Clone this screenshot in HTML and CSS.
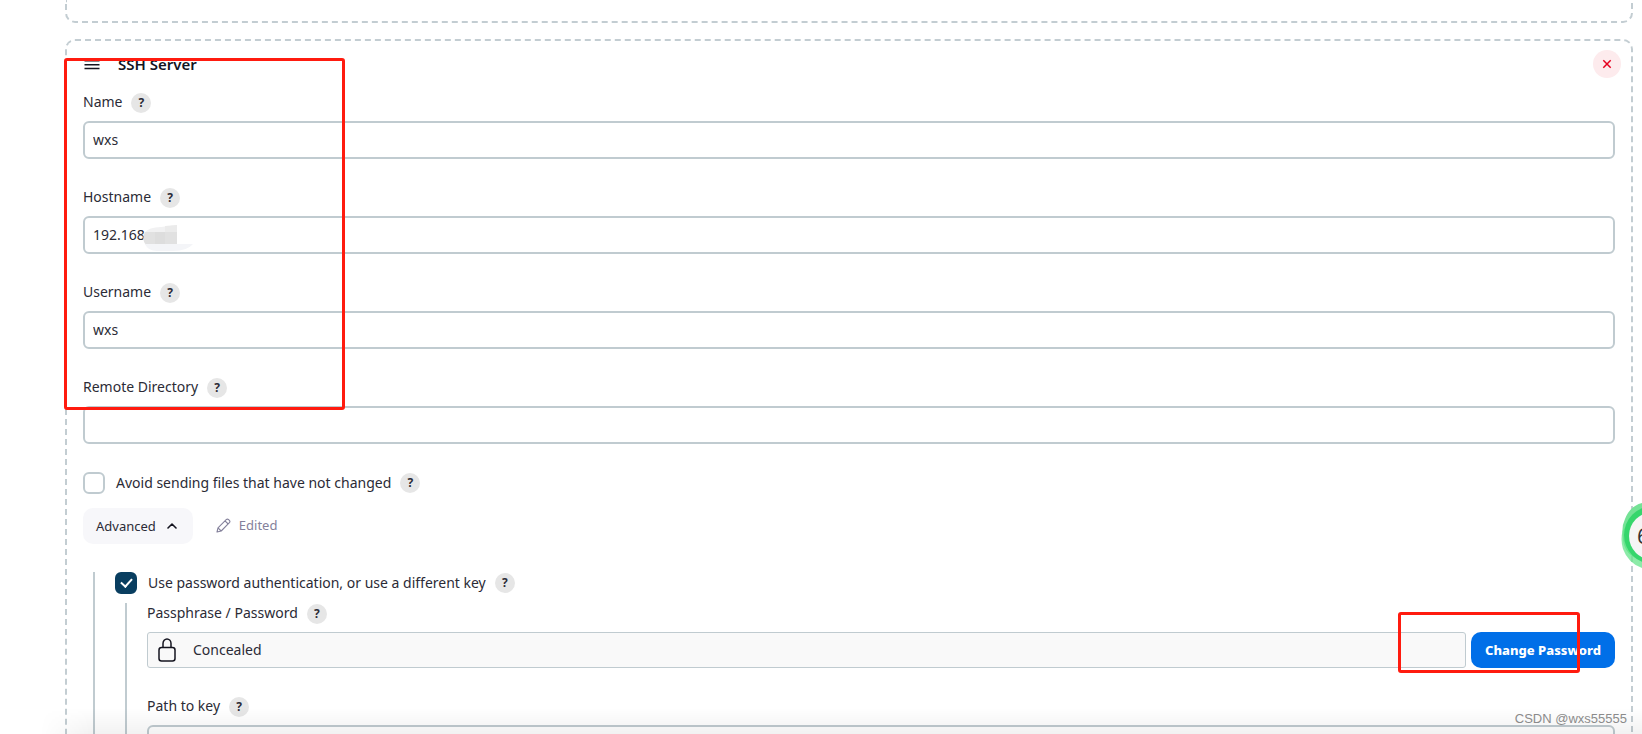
FILE: index.html
```html
<!DOCTYPE html>
<html lang="en">
<head>
<meta charset="utf-8">
<title>SSH Server configuration</title>
<link rel="stylesheet" href="styles.css">
</head>
<body>
<main class="page">
  <section class="card card-previous" aria-hidden="true"></section>
  <section class="card">
    <header class="card-header">
      <svg class="drag-handle" width="16" height="16" viewBox="0 0 16 16" aria-hidden="true"><path d="M.5 4.700h15M.5 8.700h15M.5 12.500h15" stroke="#14141f" stroke-width="1.5"/></svg>
      <h2 class="card-title">SSH Server</h2>
      <button class="delete" type="button" aria-label="Delete"><svg width="10" height="10" viewBox="0 0 10 10"><path d="M1.300 1.300l7.400 7.400M8.700 1.300L1.300 8.700" stroke="#e6001f" stroke-width="1.5"/></svg></button>
    </header>

    <div class="field">
      <div class="label-row"><label for="name">Name</label><button class="help" type="button">?</button></div>
      <input class="text-input" id="name" type="text" value="wxs">
    </div>
    <div class="field">
      <div class="label-row"><label for="host">Hostname</label><button class="help" type="button">?</button></div>
      <div class="masked">
        <input class="text-input" id="host" type="text" value="192.168">
        <svg class="smudge" width="54" height="28" viewBox="0 0 54 28" aria-hidden="true">
          <path d="M3 8Q8 2 20 2L36 0V8H3z" fill="#f1f1f2"/><path d="M24 1L36 0V8H24z" fill="#ebebeb"/>
          <path d="M4 7H36V20H5Q0 14 4 7z" fill="#e1e1e1"/><path d="M14 7h10v13H14z" fill="#dddddd"/>
          <path d="M4 19H52Q46 26 32 26H16Q7 26 4 19z" fill="#f4f5f8"/>
        </svg>
      </div>
    </div>
    <div class="field">
      <div class="label-row"><label for="user">Username</label><button class="help" type="button">?</button></div>
      <input class="text-input" id="user" type="text" value="wxs">
    </div>
    <div class="field">
      <div class="label-row"><label for="dir">Remote Directory</label><button class="help" type="button">?</button></div>
      <input class="text-input" id="dir" type="text" value="">
    </div>

    <div class="check-row">
      <input class="check" id="avoid" type="checkbox"><label for="avoid">Avoid sending files that have not changed</label><button class="help" type="button">?</button>
    </div>
    <div class="advanced-row">
      <button class="advanced" type="button">Advanced <svg width="10" height="8" viewBox="0 0 10 8" aria-hidden="true"><path d="M1 6l4-4 4 4" fill="none" stroke="#14141f" stroke-width="1.6" stroke-linecap="round" stroke-linejoin="round"/></svg></button>
      <span class="edited"><svg width="15" height="15" viewBox="0 0 15 15" aria-hidden="true"><path d="M1 14l1-4.200 8.200-8.200q1.200-1.100 2.500.1l.6.6q1.200 1.200.1 2.400L5.200 13zM9 2.900L12.200 6M2 9.800L5.200 13" fill="none" stroke="#84819b" stroke-width="1.1" stroke-linejoin="round"/></svg>Edited</span>
    </div>

    <div class="nested nested-outer">
      <div class="check-row">
        <input class="check" id="pwauth" type="checkbox" checked><label for="pwauth">Use password authentication, or use a different key</label><button class="help" type="button">?</button>
      </div>
      <div class="nested">
        <div class="field">
          <div class="label-row"><span>Passphrase / Password</span><button class="help" type="button">?</button></div>
          <div class="password-row">
            <div class="concealed">
              <svg width="18" height="24" viewBox="0 0 18 24" aria-hidden="true"><rect x="1" y="9.500" width="16" height="13.500" rx="2.500" fill="none" stroke="#14141f" stroke-width="1.5"/><path d="M5 9.500V5.500a4 4.500 0 0 1 8 0v4" fill="none" stroke="#14141f" stroke-width="1.5"/></svg>
              <span>Concealed</span>
            </div>
            <button class="primary" type="button">Change Password</button>
          </div>
        </div>
        <div class="field">
          <div class="label-row"><label for="key">Path to key</label><button class="help" type="button">?</button></div>
          <input class="text-input" id="key" type="text" value="">
        </div>
      </div>
    </div>
  </section>
</main>
<div class="bottom-shade"></div>
<div class="mark mark-fields"></div>
<div class="mark mark-password"></div>
<svg class="gauge" width="24" height="72" viewBox="0 0 24 72" aria-hidden="true">
  <path d="M24 4Q12 7 7 20Q3 28 5 40Q6 56 24 62z" fill="#75e296"/>
  <path d="M5 31Q2 40 5 50Q10 64 24 69V14z" fill="#65e48b" fill-opacity=".75"/>
  <circle cx="35" cy="36" r="29" fill="#36d66c"/>
  <circle cx="35" cy="37" r="24" fill="#f5f5f5"/>
  <text class="gauge-text" x="19" y="45">6</text>
</svg>
<div class="watermark">CSDN @wxs55555</div>
</body>
</html>
```
FILE: styles.css
```css
* { box-sizing: border-box; }
body {
  position: relative;
  height: 100vh;
  margin: 0;
  overflow: hidden;
  background: #fff;
  color: #2b2b36;
  font: 14px/20px "Noto Sans", "Open Sans", sans-serif;
}
button, input { margin: 0; color: inherit; font: inherit; }
.page { padding: 0 9px 0 65px; }
.card {
  padding: 9px 16px;
  border: 2px dashed #c3cdd2;
  border-radius: 10px;
}
.card-previous {
  height: 23px;
  margin-bottom: 16px;
  padding: 0;
  border-top: 0;
  border-radius: 0 0 10px 10px;
}
.card-header {
  display: flex;
  align-items: center;
  height: 28px;
  margin: 0 -6px 14px 0;
}
.drag-handle { margin: 0 18px 0 1px; }
.card-title {
  flex: 1;
  margin: 0;
  color: #14141f;
  font-size: 15px;
  font-weight: 600;
  line-height: 28px;
}
.delete {
  display: grid;
  place-items: center;
  width: 28px;
  height: 28px;
  padding: 0;
  border: 0;
  border-radius: 50%;
  background: #fdebed;
}
.field { margin-bottom: 28px; }
.label-row {
  display: flex;
  align-items: flex-end;
  gap: 9px;
  height: 21px;
  margin-bottom: 8px;
}
.label-row > :first-child { align-self: flex-start; line-height: 19px; }
.help {
  width: 20px;
  height: 20px;
  padding: 0;
  border: 0;
  border-radius: 50%;
  background: #e6e6e6;
  font-size: 12px;
  font-weight: 700;
  line-height: 20px;
  text-align: center;
}
.text-input {
  display: block;
  width: 100%;
  height: 38px;
  padding: 0 8px 2px;
  border: 2px solid #c0cbd0;
  border-radius: 6px;
  background: #fff;
}
.masked { position: relative; }
.smudge { position: absolute; top: 9px; left: 58px; }
.check-row { display: flex; align-items: center; height: 22px; }
.check {
  display: grid;
  place-items: center;
  width: 22px;
  height: 22px;
  margin-right: 11px;
  border: 2px solid #c0cbd0;
  border-radius: 6px;
  background: #fff;
  appearance: none;
}
.check:checked { border-color: #093e60; background: #093e60; }
.check:checked::after {
  width: 5px;
  height: 9px;
  margin-bottom: 3px;
  border: solid #fff;
  border-width: 0 2px 2px 0;
  content: "";
  transform: rotate(42deg);
}
.check-row .help { margin-left: 9px; }
.advanced-row {
  display: flex;
  align-items: center;
  gap: 23px;
  margin: 14px 0 28px;
}
.advanced {
  display: flex;
  align-items: center;
  gap: 11px;
  height: 36px;
  padding: 0 16px 0 13px;
  border: 0;
  border-radius: 10px;
  background: #f7f7fa;
  font-size: 13px;
}
.edited {
  display: flex;
  align-items: center;
  gap: 8px;
  padding-bottom: 2px;
  color: #84819b;
  font-size: 13px;
}
.nested {
  margin: 9px 0 0 10px;
  padding-left: 20px;
  border-left: 2px solid #c0cbd0;
}
.nested-outer { margin-top: 0; }
.password-row { display: flex; gap: 5px; }
.concealed {
  display: flex;
  flex: 1;
  align-items: center;
  gap: 17px;
  height: 36px;
  padding: 0 10px;
  border: 1px solid #c0cbd0;
  border-radius: 3px;
  background: #f9f9f9;
}
.primary {
  height: 36px;
  padding: 0 14px;
  border: 0;
  border-radius: 10px;
  background: #006fe8;
  color: #fff;
  font-size: 13px;
  font-weight: 800;
}
.bottom-shade {
  position: absolute;
  right: 0;
  bottom: 0;
  left: 40px;
  height: 26px;
  background: linear-gradient(transparent, rgba(0, 0, 0, .05));
  mask-image: linear-gradient(90deg, transparent, #000 50px);
}
.mark { position: absolute; border: 3px solid #ff1b0f; border-radius: 3px; }
.mark-fields { top: 58px; left: 64px; width: 281px; height: 352px; }
.mark-password { top: 612px; left: 1398px; width: 182px; height: 61px; }
.gauge { position: absolute; top: 499px; right: 0; }
.gauge-text { fill: #333; font: 22px "Open Sans", sans-serif; }
.watermark {
  position: absolute;
  right: 15px;
  bottom: 5px;
  color: #8b8b8b;
  font: 13px/20px "Liberation Sans", sans-serif;
}
```
